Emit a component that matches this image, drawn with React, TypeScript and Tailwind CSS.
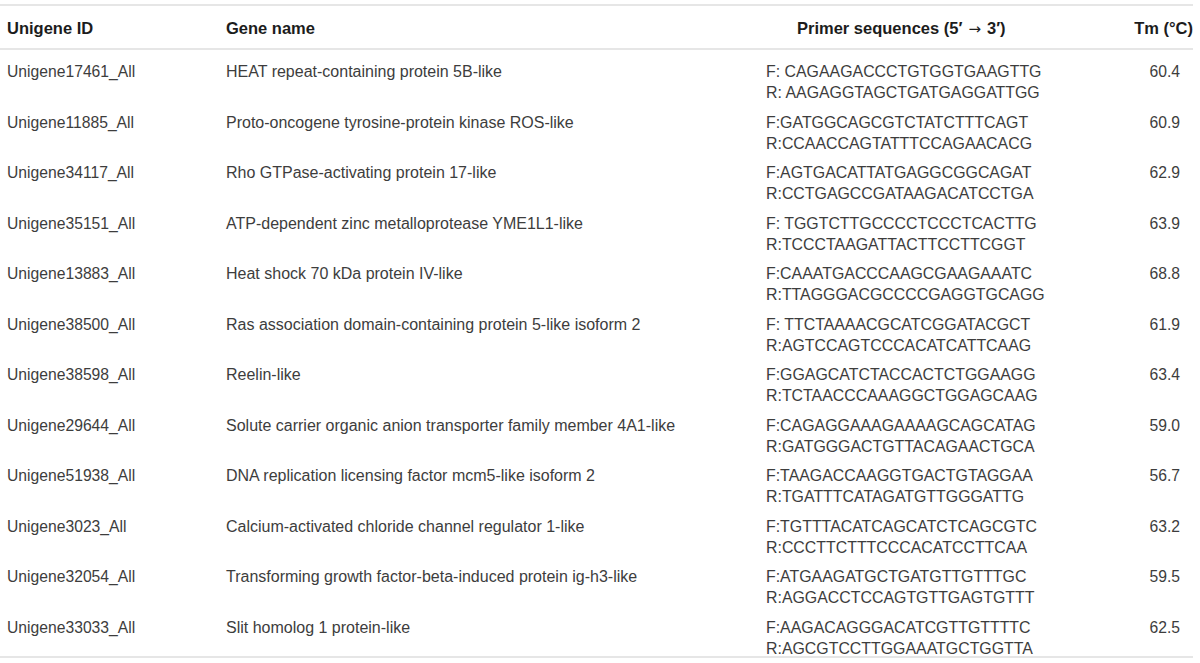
const rows = [
  ['Unigene17461_All', 'HEAT repeat-containing protein 5B-like', 'F: CAGAAGACCCTGTGGTGAAGTTG', 'R: AAGAGGTAGCTGATGAGGATTGG', '60.4'],
  ['Unigene11885_All', 'Proto-oncogene tyrosine-protein kinase ROS-like', 'F:GATGGCAGCGTCTATCTTTCAGT', 'R:CCAACCAGTATTTCCAGAACACG', '60.9'],
  ['Unigene34117_All', 'Rho GTPase-activating protein 17-like', 'F:AGTGACATTATGAGGCGGCAGAT', 'R:CCTGAGCCGATAAGACATCCTGA', '62.9'],
  ['Unigene35151_All', 'ATP-dependent zinc metalloprotease YME1L1-like', 'F: TGGTCTTGCCCCTCCCTCACTTG', 'R:TCCCTAAGATTACTTCCTTCGGT', '63.9'],
  ['Unigene13883_All', 'Heat shock 70 kDa protein IV-like', 'F:CAAATGACCCAAGCGAAGAAATC', 'R:TTAGGGACGCCCCGAGGTGCAGG', '68.8'],
  ['Unigene38500_All', 'Ras association domain-containing protein 5-like isoform 2', 'F: TTCTAAAACGCATCGGATACGCT', 'R:AGTCCAGTCCCACATCATTCAAG', '61.9'],
  ['Unigene38598_All', 'Reelin-like', 'F:GGAGCATCTACCACTCTGGAAGG', 'R:TCTAACCCAAAGGCTGGAGCAAG', '63.4'],
  ['Unigene29644_All', 'Solute carrier organic anion transporter family member 4A1-like', 'F:CAGAGGAAAGAAAAGCAGCATAG', 'R:GATGGGACTGTTACAGAACTGCA', '59.0'],
  ['Unigene51938_All', 'DNA replication licensing factor mcm5-like isoform 2', 'F:TAAGACCAAGGTGACTGTAGGAA', 'R:TGATTTCATAGATGTTGGGATTG', '56.7'],
  ['Unigene3023_All', 'Calcium-activated chloride channel regulator 1-like', 'F:TGTTTACATCAGCATCTCAGCGTC', 'R:CCCTTCTTTCCCACATCCTTCAA', '63.2'],
  ['Unigene32054_All', 'Transforming growth factor-beta-induced protein ig-h3-like', 'F:ATGAAGATGCTGATGTTGTTTGC', 'R:AGGACCTCCAGTGTTGAGTGTTT', '59.5'],
  ['Unigene33033_All', 'Slit homolog 1 protein-like', 'F:AAGACAGGGACATCGTTGTTTTC', 'R:AGCGTCCTTGGAAATGCTGGTTA', '62.5'],
];

export default function App() {
  return (
    <div className="w-[1200px] h-[663px] bg-white overflow-hidden pt-[4px] font-['Liberation_Sans',Arial,sans-serif]">
      <div className="w-[1193px] border-t-2 border-b-2 border-[#e6e6e6]">
        <div className="flex h-[44px] items-center pt-[3px] border-b-2 border-[#e6e6e6] text-[16.5px] font-bold text-[#1c1c1c] whitespace-nowrap">
          <div className="w-[226px] pl-[7px]">Unigene ID</div>
          <div className="w-[540px]">Gene name</div>
          <div className="w-[340px] pl-[31px]">
            Primer sequences (5′
            <span className="mx-[6px] font-['DejaVu_Sans'] font-normal text-[15px]">→</span>
            3′)
          </div>
          <div className="flex-1 text-right">Tm (°C)</div>
        </div>
        {rows.map((r) => (
          <div key={r[0]} className="flex h-[50.5px] pt-[11px] text-[15.7px] leading-[21px] text-[#3d3d3d] whitespace-nowrap">
            <div className="w-[226px] pl-[7px]">{r[0]}</div>
            <div className="w-[540px] text-[16px]">{r[1]}</div>
            <div className="w-[340px] text-[15.9px]">
              <div>{r[2]}</div>
              <div>{r[3]}</div>
            </div>
            <div className="flex-1 text-right pr-[13px]">{r[4]}</div>
          </div>
        ))}
      </div>
    </div>
  );
}
